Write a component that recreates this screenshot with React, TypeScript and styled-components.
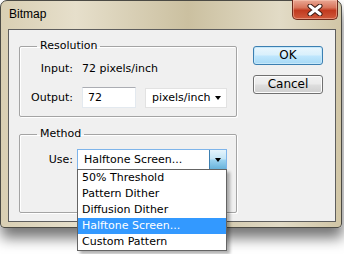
import styled, { createGlobalStyle } from "styled-components";

const GlobalStyle = createGlobalStyle`
  html, body { margin: 0; padding: 0; background: #fff; }
  body {
    font-family: "DejaVu Sans", Verdana, sans-serif;
    font-size: 11px;
    color: #000;
  }
  #root { height: 254px; width: 344px; overflow: hidden; }
  * { box-sizing: border-box; }
`;

const Window = styled.div`
  width: 342px;
  height: 228px;
  border: 1px solid #4b4a44;
  border-radius: 7px 7px 4px 4px;
  background: linear-gradient(90deg, #d9cfb3 0%, #e6dfcb 22%, #cbc0a0 55%, #e2dbc6 82%, #d1c6a6 100%);
  box-shadow: 1px 10px 14px rgba(0, 0, 0, 0.55);
  display: flex;
  flex-direction: column;
  padding: 0 5px 5px 7px;
`;

const TitleBar = styled.div`
  height: 28px;
  display: flex;
  align-items: flex-start;
`;

const Title = styled.div`
  padding: 6px 0 0 1px;
  font-family: "Liberation Sans", Arial, sans-serif;
  font-size: 12px;
  line-height: 14px;
`;

const CloseButton = styled.div`
  margin: -1px -2px 0 auto;
  width: 46px;
  height: 20px;
  border: 1px solid #6e2a1c;
  border-top: none;
  border-radius: 0 0 5px 5px;
  background: linear-gradient(180deg, #eaa894 0%, #d8755b 40%, #c13a1f 55%, #d05a3c 100%);
  box-shadow: inset 0 0 0 1px rgba(255, 210, 190, 0.45);
  display: flex;
  align-items: center;
  justify-content: center;
`;

const Client = styled.div`
  flex: 1;
  border: 1px solid #5e5e5e;
  background: #f0f0f0;
  display: flex;
  gap: 16px;
  padding: 9px 0 0 10px;
`;

const LeftColumn = styled.div`
  width: 218px;
  display: flex;
  flex-direction: column;
  gap: 10px;
`;

const Group = styled.fieldset<{ $height: number }>`
  margin: 0;
  padding: 0;
  height: ${(p) => p.$height}px;
  border: 1px solid #a4a4a4;
  border-radius: 2px;
  box-shadow: 1px 1px 0 #fff, inset 1px 1px 0 #fff;
  min-width: 0;
`;

const Legend = styled.legend`
  margin-left: 17px;
  padding: 0 3px;
  line-height: 14px;
`;

const FieldGrid = styled.div<{ $top: number }>`
  display: grid;
  grid-template-columns: 53px auto;
  column-gap: 9px;
  row-gap: 11px;
  align-items: center;
  padding-top: ${(p) => p.$top}px;
`;

const Label = styled.div<{ $width?: number }>`
  text-align: right;
  line-height: 14px;
  ${(p) => (p.$width ? `width: ${p.$width}px;` : "")}
`;

const Value = styled.div`
  line-height: 14px;
`;

const Inline = styled.div`
  display: flex;
  align-items: center;
  gap: 9px;
`;

const TextBox = styled.div`
  width: 54px;
  height: 21px;
  background: #fff;
  border: 1px solid #e3e9ef;
  border-top-color: #abadb3;
  padding: 2px 0 0 5px;
  line-height: 15px;
`;

const Select = styled.div`
  width: 82px;
  height: 20px;
  background: #fff;
  border: 1px solid #e2e2e2;
  display: flex;
  align-items: center;
  padding: 0 5px 0 6px;
  justify-content: space-between;
`;

const Caret = styled.div`
  width: 0;
  height: 0;
  border-left: 3.5px solid transparent;
  border-right: 3.5px solid transparent;
  border-top: 4px solid #000;
`;

const MethodRow = styled.div`
  display: flex;
  align-items: center;
  gap: 4px;
  padding-top: 8px;
`;

const ComboWrap = styled.div`
  position: relative;
`;

const Combo = styled.div`
  width: 150px;
  height: 21px;
  background: #fff;
  border: 1px solid #7eb4ea;
  display: flex;
  align-items: stretch;
`;

const ComboText = styled.div`
  flex: 1;
  padding-left: 6px;
  line-height: 19px;
`;

const ComboButton = styled.div`
  width: 17px;
  border-left: 1px solid #3c7fb1;
  background: linear-gradient(180deg, #e5f4fc 0%, #c4e5f6 45%, #98d1ef 55%, #68b3db 100%);
  display: flex;
  align-items: center;
  justify-content: center;
`;

const DropList = styled.div`
  position: absolute;
  top: 100%;
  left: 0;
  width: 150px;
  margin-top: -1px;
  background: #fff;
  border: 1px solid #646464;
  box-shadow: 3px 3px 3px rgba(0, 0, 0, 0.3);
  z-index: 2;
`;

const DropItem = styled.div<{ $active?: boolean }>`
  height: 16px;
  line-height: 16px;
  padding-left: 4px;
  background: ${(p) => (p.$active ? "#3399ff" : "transparent")};
  color: ${(p) => (p.$active ? "#fff" : "#000")};
`;

const ButtonColumn = styled.div`
  display: flex;
  flex-direction: column;
  gap: 10px;
  padding-top: 7px;
`;

const Button = styled.div<{ $default?: boolean }>`
  width: 70px;
  height: 19px;
  border: 1px solid ${(p) => (p.$default ? "#3c7fb1" : "#707070")};
  border-radius: 3px;
  background: ${(p) =>
    p.$default
      ? "linear-gradient(180deg, #eaf6fd 0%, #d9f0fc 45%, #bee6fd 55%, #a7d9f5 100%)"
      : "linear-gradient(180deg, #f2f2f2 0%, #ebebeb 45%, #dddddd 55%, #cfcfcf 100%)"};
  box-shadow: inset 0 0 0 1px ${(p) => (p.$default ? "#c6e8fa" : "#fcfcfc")};
  text-align: center;
  font-size: 12px;
  line-height: 17px;
`;

const items = ["50% Threshold", "Pattern Dither", "Diffusion Dither", "Halftone Screen...", "Custom Pattern"];

export default function App() {
  return (
    <>
      <GlobalStyle />
      <Window>
        <TitleBar>
          <Title>Bitmap</Title>
          <CloseButton>
            <svg width="16" height="12" viewBox="0 0 16 12">
              <path d="M3 2 L13 10 M13 2 L3 10" stroke="#3a1a12" strokeWidth="5" strokeLinecap="round" />
              <path d="M3 2 L13 10 M13 2 L3 10" stroke="#fff" strokeWidth="3" strokeLinecap="round" />
            </svg>
          </CloseButton>
        </TitleBar>
        <Client>
          <LeftColumn>
            <Group $height={78}>
              <Legend>Resolution</Legend>
              <FieldGrid $top={9}>
                <Label>Input:</Label>
                <Value>72 pixels/inch</Value>
                <Label>Output:</Label>
                <Inline>
                  <TextBox>72</TextBox>
                  <Select>
                    pixels/inch
                    <Caret />
                  </Select>
                </Inline>
              </FieldGrid>
            </Group>
            <Group $height={86}>
              <Legend>Method</Legend>
              <MethodRow>
                <Label $width={53}>Use:</Label>
                <ComboWrap>
                  <Combo>
                    <ComboText>Halftone Screen...</ComboText>
                    <ComboButton>
                      <Caret />
                    </ComboButton>
                  </Combo>
                  <DropList>
                    {items.map((item) => (
                      <DropItem key={item} $active={item === "Halftone Screen..."}>
                        {item}
                      </DropItem>
                    ))}
                  </DropList>
                </ComboWrap>
              </MethodRow>
            </Group>
          </LeftColumn>
          <ButtonColumn>
            <Button $default>OK</Button>
            <Button>Cancel</Button>
          </ButtonColumn>
        </Client>
      </Window>
    </>
  );
}
